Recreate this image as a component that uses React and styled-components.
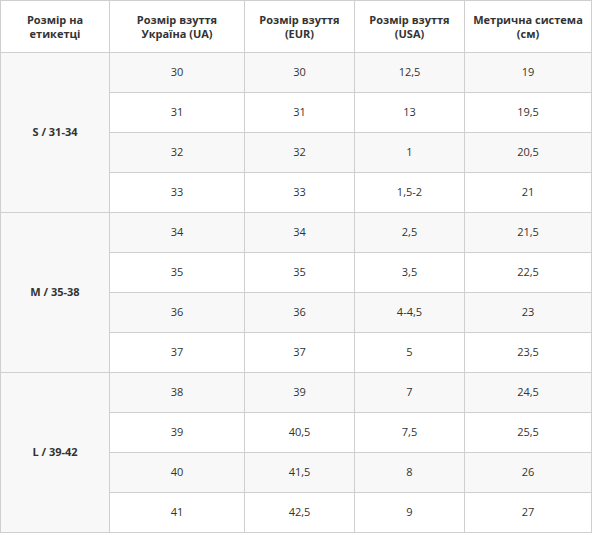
import React from "react";
import styled, { createGlobalStyle } from "styled-components";

const GlobalStyle = createGlobalStyle`
  body {
    margin: 0;
    background: #fff;
    font-family: "Open Sans", "Noto Sans", sans-serif;
  }
`;

const Wrapper = styled.div`
  width: 592px;
`;

const Table = styled.table`
  width: 591px;
  border-collapse: collapse;
  table-layout: fixed;
  color: #333;
  font-size: 11px;
`;

const HeadCell = styled.th`
  height: 51px;
  padding: 0 6px;
  border: 1px solid #cfcfcf;
  font-weight: 700;
  line-height: 14px;
  text-align: center;
  vertical-align: middle;
  background: #fff;
`;

const Row = styled.tr`
  background: ${({ $odd }) => ($odd ? "#f8f8f8" : "#fff")};
`;

const Cell = styled.td`
  height: 38px;
  padding: 0 6px 1px;
  border: 1px solid #cfcfcf;
  text-align: center;
  vertical-align: middle;
  line-height: 14px;
`;

const LabelCell = styled(Cell)`
  font-weight: 700;
  background: #f8f8f8;
`;

const widths = [109, 135, 110, 110, 127];

const headers = [
  ["Розмір на", "етикетці"],
  ["Розмір взуття", "Україна (UA)"],
  ["Розмір взуття", "(EUR)"],
  ["Розмір взуття", "(USA)"],
  ["Метрична система", "(см)"],
];

const groups = [
  {
    label: "S / 31-34",
    rows: [
      ["30", "30", "12,5", "19"],
      ["31", "31", "13", "19,5"],
      ["32", "32", "1", "20,5"],
      ["33", "33", "1,5-2", "21"],
    ],
  },
  {
    label: "M / 35-38",
    rows: [
      ["34", "34", "2,5", "21,5"],
      ["35", "35", "3,5", "22,5"],
      ["36", "36", "4-4,5", "23"],
      ["37", "37", "5", "23,5"],
    ],
  },
  {
    label: "L / 39-42",
    rows: [
      ["38", "39", "7", "24,5"],
      ["39", "40,5", "7,5", "25,5"],
      ["40", "41,5", "8", "26"],
      ["41", "42,5", "9", "27"],
    ],
  },
];

export default function App() {
  return (
    <Wrapper>
      <GlobalStyle />
      <Table>
        <colgroup>
          {widths.map((w, i) => (
            <col key={i} style={{ width: w }} />
          ))}
        </colgroup>
        <thead>
          <tr>
            {headers.map((h, i) => (
              <HeadCell key={i}>
                {h[0]}
                <br />
                {h[1]}
              </HeadCell>
            ))}
          </tr>
        </thead>
        <tbody>
          {groups.map((g) =>
            g.rows.map((r, i) => (
              <Row key={g.label + i} $odd={i % 2 === 0}>
                {i === 0 && <LabelCell rowSpan={4}>{g.label}</LabelCell>}
                {r.map((v, j) => (
                  <Cell key={j}>{v}</Cell>
                ))}
              </Row>
            ))
          )}
        </tbody>
      </Table>
    </Wrapper>
  );
}
